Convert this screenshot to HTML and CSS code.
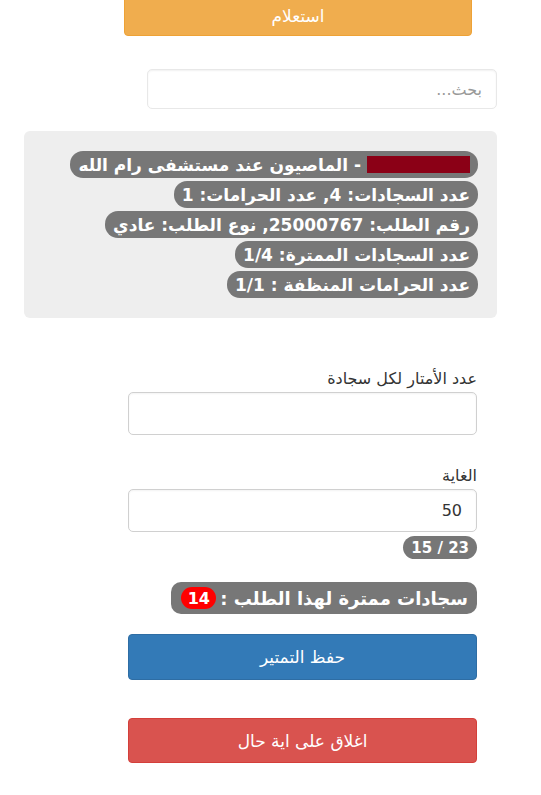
FILE: index.html
```html
<!DOCTYPE html>
<html lang="ar" dir="rtl">
<head>
<meta charset="utf-8">
<title>تمتير</title>
<link rel="stylesheet" href="styles.css">
</head>
<body>
<div class="page">
  <button class="btn btn-orange btn-top">استعلام</button>
  <input class="search" type="text" placeholder="بحث...">
  <div class="panel">
    <span class="pill"><span class="redact"></span> - الماصيون عند مستشفى رام الله</span>
    <span class="pill">عدد السجادات: 4, عدد الحرامات: 1</span>
    <span class="pill">رقم الطلب: 25000767, نوع الطلب: عادي</span>
    <span class="pill">عدد السجادات الممترة: 1/4</span>
    <span class="pill">عدد الحرامات المنظفة : 1/1</span>
  </div>
  <div class="form">
    <label class="lbl lbl-first">عدد الأمتار لكل سجادة</label>
    <input class="field" type="text">
    <label class="lbl lbl-second">الغاية</label>
    <input class="field" type="text" value="50">
    <span class="pill pill-small" dir="ltr">15 / 23</span>
    <span class="pill pill-big">سجادات ممترة لهذا الطلب : <span class="badge">14</span></span>
    <button class="btn btn-blue">حفظ التمتير</button>
    <button class="btn btn-red">اغلاق على اية حال</button>
  </div>
</div>
</body>
</html>
```

FILE: styles.css
```css
html, body {
  margin: 0;
  padding: 0;
  background: #ffffff;
}
body {
  font-family: "DejaVu Sans", "Noto Sans", sans-serif;
  width: 541px;
  height: 795px;
  overflow: hidden;
}
.page {
  display: flex;
  flex-direction: column;
  align-items: flex-start;
}
.btn {
  display: flex;
  align-items: center;
  justify-content: center;
  border-radius: 4px;
  color: #ffffff;
  font-family: "DejaVu Sans", sans-serif;
  font-size: 17px;
  border: 1px solid transparent;
  padding: 0;
  cursor: pointer;
}
.btn-top {
  margin-right: 69px;
  width: 348px;
  height: 46px;
  margin-top: -10px;
  padding-top: 6px;
}
.btn-orange {
  background: #f0ad4e;
  border-color: #eea236;
}
.search {
  box-sizing: border-box;
  margin-top: 33px;
  margin-right: 44px;
  width: 350px;
  height: 40px;
  border: 1px solid #e8e8e8;
  border-radius: 5px;
  padding: 0 14px;
  font-family: "DejaVu Sans", sans-serif;
  font-size: 16px;
  color: #555;
  box-shadow: inset 0 1px 2px rgba(0,0,0,0.06);
}
.search::placeholder {
  color: #999;
}
.panel {
  box-sizing: border-box;
  margin-top: 22px;
  margin-right: 44px;
  width: 473px;
  background: #eeeeee;
  border-radius: 6px;
  padding: 20px 19px 20px 19px;
  display: flex;
  flex-direction: column;
  align-items: flex-start;
  gap: 3px;
}
.pill {
  display: inline-flex;
  align-items: center;
  background: #777777;
  color: #ffffff;
  font-weight: bold;
  font-size: 17px;
  height: 27px;
  padding: 0 8px;
  border-radius: 13px;
  white-space: nowrap;
}
.redact {
  display: inline-block;
  width: 103px;
  height: 17px;
  background: #8b0016;
  margin-left: 6px;
}
.form {
  margin-right: 64px;
  width: 349px;
  display: flex;
  flex-direction: column;
  align-items: flex-start;
}
.lbl {
  font-size: 16px;
  color: #333;
  height: 22px;
  line-height: 22px;
}
.lbl-first {
  margin-top: 50px;
}
.lbl-second {
  margin-top: 30px;
}
.field {
  box-sizing: border-box;
  width: 349px;
  height: 43px;
  margin-top: 2px;
  border: 1px solid #d0d0d0;
  border-radius: 5px;
  padding: 0 14px;
  font-family: "DejaVu Sans", sans-serif;
  font-size: 16px;
  color: #333;
  box-shadow: inset 0 1px 2px rgba(0,0,0,0.05);
}
.pill-small {
  margin-top: 4px;
  height: 23px;
  font-size: 15px;
  border-radius: 12px;
  padding: 0 8px;
}
.pill-big {
  margin-top: 23px;
  height: 32px;
  font-size: 18px;
  border-radius: 10px;
  padding: 0 9px 0 10px;
}
.badge {
  display: inline-flex;
  align-items: center;
  justify-content: center;
  background: #ff0000;
  color: #ffffff;
  font-weight: bold;
  font-size: 16px;
  height: 22px;
  min-width: 35px;
  border-radius: 11px;
  margin-right: 4px;
}
.btn-blue {
  margin-top: 20px;
  width: 349px;
  height: 46px;
  background: #337ab7;
  border-color: #2e6da4;
}
.btn-red {
  margin-top: 38px;
  width: 349px;
  height: 45px;
  background: #d9534f;
  border-color: #d43f3a;
}
```
